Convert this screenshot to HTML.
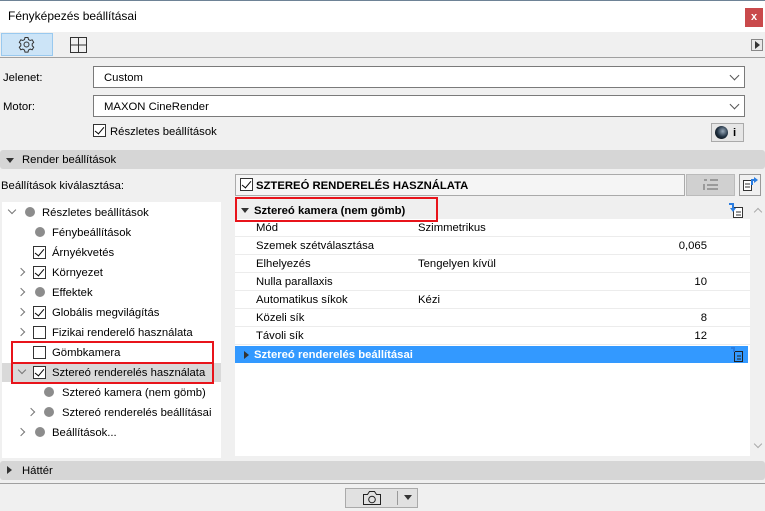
<!DOCTYPE html>
<html><head><meta charset="utf-8"><style>
*{box-sizing:border-box;margin:0;padding:0}
body{width:765px;height:511px;overflow:hidden;background:#f0f0f0;font-family:"Liberation Sans",sans-serif;font-size:11.3px;color:#000;position:relative}
.a{position:absolute}
.dd{position:absolute;background:#fff;border:1px solid #7a7a7a;height:22px;padding:5px 10px 0;font-size:11.3px}
.dd:after{content:"";position:absolute;right:6px;top:5px;width:6px;height:6px;border-right:1px solid #555;border-bottom:1px solid #555;transform:rotate(45deg)}
.cb{position:absolute;width:13px;height:13px;border:1px solid #333;background:#fff}
.cb.on:after{content:"";position:absolute;left:3px;top:0px;width:4px;height:8px;border-right:1.5px solid #000;border-bottom:1.5px solid #000;transform:rotate(40deg)}
.bar{position:absolute;left:0;width:765px;height:19px;background:#d6d6d6;border-radius:3px}
.tri{position:absolute;width:0;height:0;border-left:4px solid transparent;border-right:4px solid transparent;border-top:5px solid #333}
.trr{position:absolute;width:0;height:0;border-top:4px solid transparent;border-bottom:4px solid transparent;border-left:5px solid #333}
.dot{position:absolute;width:10px;height:10px;border-radius:50%;background:#8c8c8c}
.chv{position:absolute;width:6px;height:6px;border-right:1.3px solid #777;border-bottom:1.3px solid #777}
.chv.r{transform:rotate(-45deg)}
.chv.d{transform:rotate(45deg)}
.t{position:absolute;white-space:nowrap;line-height:14px}
.row{position:absolute;left:235px;width:515px;height:18px;border-bottom:1px solid #ececec}
.row span{position:absolute;top:3px;white-space:nowrap}
.red{position:absolute;border:2px solid #e8141b}
</style></head><body>
<div class="a" style="left:0;top:0;width:765px;height:32px;background:#fff;border-top:1px solid #6e8396"></div>
<div class="t" style="left:8px;top:9px;font-size:12px">Fényképezés beállításai</div>
<div class="a" style="left:745px;top:8px;width:18px;height:19px;background:#c9494b;color:#fff;font-size:11px;font-weight:bold;text-align:center;line-height:18px">x</div>
<div class="a" style="left:1px;top:33px;width:52px;height:23px;background:#cce4f7;border:1px solid #99c9ef"></div>
<svg class="a" style="left:18px;top:36px" width="17" height="17" viewBox="0 0 17 17"><circle cx="8.5" cy="8.5" r="2.5" fill="none" stroke="#333"/><path d="M7 1.5h3l.5 2 1.7 1 2-.7 1.5 2.6-1.5 1.4v2l1.5 1.4-1.5 2.6-2-.7-1.7 1-.5 2h-3l-.5-2-1.7-1-2 .7L1.3 11.2l1.5-1.4v-2L1.3 6.4 2.8 3.8l2 .7 1.7-1z" fill="none" stroke="#333"/></svg>
<svg class="a" style="left:70px;top:37px" width="17" height="16" viewBox="0 0 17 16"><rect x=".5" y=".5" width="16" height="15" fill="none" stroke="#333"/><path d="M8.5 1v14M1 8h15" stroke="#333"/></svg>
<div class="a" style="left:751px;top:39px;width:12px;height:12px;border:1px solid #888;background:#e8e8e8"></div>
<div class="trr" style="left:755px;top:41px"></div>
<div class="a" style="left:0;top:57px;width:765px;height:1px;background:#a0a0a0"></div>
<div class="t" style="left:3px;top:71px">Jelenet:</div>
<div class="dd" style="left:93px;top:66px;width:652px">Custom</div>
<div class="t" style="left:3px;top:100px">Motor:</div>
<div class="dd" style="left:93px;top:95px;width:652px">MAXON CineRender</div>
<div class="cb on" style="left:93px;top:124px"></div>
<div class="t" style="left:110px;top:125px">Részletes beállítások</div>
<div class="a" style="left:711px;top:123px;width:33px;height:19px;border:1px solid #aaa;background:#e6e6e6"></div>
<div class="a" style="left:715px;top:126px;width:13px;height:13px;border-radius:50%;background:radial-gradient(circle at 60% 40%,#9ab 0,#234 50%,#000 100%)"></div>
<div class="t" style="left:733px;top:126px;font-weight:bold">i</div>
<div class="bar" style="top:150px"></div>
<div class="tri" style="left:6px;top:158px"></div>
<div class="t" style="left:22px;top:153px">Render beállítások</div>
<div class="t" style="left:1px;top:179px">Beállítások kiválasztása:</div>
<div class="a" style="left:235px;top:174px;width:450px;height:22px;border:1px solid #aaa;background:#f5f5f5"></div>
<div class="cb on" style="left:240px;top:178px"></div>
<div class="t" style="left:256px;top:179px;font-weight:bold">SZTEREÓ RENDERELÉS HASZNÁLATA</div>
<div class="a" style="left:686px;top:174px;width:49px;height:22px;background:#d0d0d0;border:1px solid #bbb"></div>
<svg class="a" style="left:702px;top:178px" width="18" height="14"><path d="M2 2h3M8 2h8M2 6v6M5 7h3M8 7h8M5 11h3M8 11h8" stroke="#9a9a9a" stroke-width="2"/></svg>
<div class="a" style="left:739px;top:174px;width:22px;height:22px;border:1px solid #999;background:#f0f0f0"></div>
<svg class="a" style="left:742px;top:176px" width="17" height="17"><path d="M1.5 4.5h8v10h-8z" fill="#fff" stroke="#333"/><path d="M3 8h5M3 11h5" stroke="#333"/><path d="M10 9V4h4" fill="none" stroke="#2a7de1" stroke-width="2"/><path d="M12 1l4 3-4 3z" fill="#2a7de1"/></svg>
<div class="a" style="left:2px;top:202px;width:219px;height:256px;background:#fff"></div>
<div class="a" style="left:2px;top:363px;width:219px;height:19px;background:#d9d9d9"></div>
<div class="chv d" style="left:9px;top:207px"></div><div class="dot" style="left:25px;top:207px"></div><div class="t" style="left:42px;top:206px">Részletes beállítások</div>
<div class="dot" style="left:35px;top:227px"></div><div class="t" style="left:52px;top:226px">Fénybeállítások</div>
<div class="cb on" style="left:33px;top:246px"></div><div class="t" style="left:52px;top:246px">Árnyékvetés</div>
<div class="chv r" style="left:18px;top:269px"></div><div class="cb on" style="left:33px;top:266px"></div><div class="t" style="left:52px;top:266px">Környezet</div>
<div class="chv r" style="left:18px;top:289px"></div><div class="dot" style="left:35px;top:287px"></div><div class="t" style="left:52px;top:286px">Effektek</div>
<div class="chv r" style="left:18px;top:309px"></div><div class="cb on" style="left:33px;top:306px"></div><div class="t" style="left:52px;top:306px">Globális megvilágítás</div>
<div class="chv r" style="left:18px;top:329px"></div><div class="cb" style="left:33px;top:326px"></div><div class="t" style="left:52px;top:326px">Fizikai renderelő használata</div>
<div class="cb" style="left:33px;top:346px"></div><div class="t" style="left:52px;top:346px">Gömbkamera</div>
<div class="chv d" style="left:19px;top:367px"></div><div class="cb on" style="left:33px;top:366px"></div><div class="t" style="left:52px;top:366px">Sztereó renderelés használata</div>
<div class="dot" style="left:44px;top:387px"></div><div class="t" style="left:62px;top:386px">Sztereó kamera (nem gömb)</div>
<div class="chv r" style="left:28px;top:409px"></div><div class="dot" style="left:44px;top:407px"></div><div class="t" style="left:62px;top:406px">Sztereó renderelés beállításai</div>
<div class="chv r" style="left:18px;top:429px"></div><div class="dot" style="left:35px;top:427px"></div><div class="t" style="left:52px;top:426px">Beállítások...</div>
<div class="red" style="left:11px;top:341px;width:203px;height:23px"></div>
<div class="red" style="left:11px;top:362px;width:203px;height:22px"></div>
<div class="a" style="left:235px;top:200px;width:515px;height:256px;background:#fff"></div>
<div class="a" style="left:750px;top:200px;width:15px;height:256px;background:#f0f0f0"></div>
<div class="chv" style="left:755px;top:209px;transform:rotate(-135deg);border-color:#aaa"></div>
<div class="chv d" style="left:755px;top:441px;border-color:#aaa"></div>
<div class="a" style="left:235px;top:200px;width:515px;height:19px;background:#efefef"></div>
<div class="tri" style="left:241px;top:208px"></div>
<div class="t" style="left:254px;top:204px;font-weight:bold">Sztereó kamera (nem gömb)</div>
<svg class="a" style="left:728px;top:202px" width="16" height="16"><path d="M5.5 5.5h9v10h-9z" fill="#fff" stroke="#333"/><path d="M8 10h5M8 13h5" stroke="#333"/><path d="M1 2h4v5" fill="none" stroke="#2a7de1" stroke-width="2"/><path d="M2 6l3 4 3-4z" fill="#2a7de1"/></svg>
<div class="red" style="left:235px;top:197px;width:203px;height:25px"></div>
<div class="row" style="top:219px"><span style="left:21px">Mód</span><span style="left:183px">Szimmetrikus</span></div>
<div class="row" style="top:237px"><span style="left:21px">Szemek szétválasztása</span><span style="right:43px">0,065</span></div>
<div class="row" style="top:255px"><span style="left:21px">Elhelyezés</span><span style="left:183px">Tengelyen kívül</span></div>
<div class="row" style="top:273px"><span style="left:21px">Nulla parallaxis</span><span style="right:43px">10</span></div>
<div class="row" style="top:291px"><span style="left:21px">Automatikus síkok</span><span style="left:183px">Kézi</span></div>
<div class="row" style="top:309px"><span style="left:21px">Közeli sík</span><span style="right:43px">8</span></div>
<div class="row" style="top:327px"><span style="left:21px">Távoli sík</span><span style="right:43px">12</span></div>
<div class="a" style="left:235px;top:346px;width:513px;height:17px;background:#3399ff"></div>
<div class="trr" style="left:244px;top:351px"></div>
<div class="t" style="left:254px;top:348px;color:#fff;font-weight:bold">Sztereó renderelés beállításai</div>
<svg class="a" style="left:730px;top:347px" width="14" height="15"><path d="M4.5 4.5h8v10h-8z" fill="none" stroke="#222"/><path d="M7 9h4M7 12h4" stroke="#222"/><path d="M1 1h3v4" fill="none" stroke="#2a7de1" stroke-width="2"/></svg>
<div class="bar" style="top:461px"></div>
<div class="trr" style="left:7px;top:466px"></div>
<div class="t" style="left:22px;top:464px">Háttér</div>
<div class="a" style="left:0;top:483px;width:765px;height:1px;background:#a0a0a0"></div>
<div class="a" style="left:345px;top:488px;width:73px;height:20px;border:1px solid #aaa;background:#e1e1e1"></div>
<div class="a" style="left:397px;top:491px;width:1px;height:14px;background:#999"></div>
<svg class="a" style="left:362px;top:490px" width="20" height="16"><path d="M1.5 4.5h4l2-3h5l2 3h4v10h-17z" fill="none" stroke="#222"/><circle cx="10" cy="9.5" r="3.3" fill="none" stroke="#222"/></svg>
<div class="tri" style="left:404px;top:495px"></div>
</body></html>
